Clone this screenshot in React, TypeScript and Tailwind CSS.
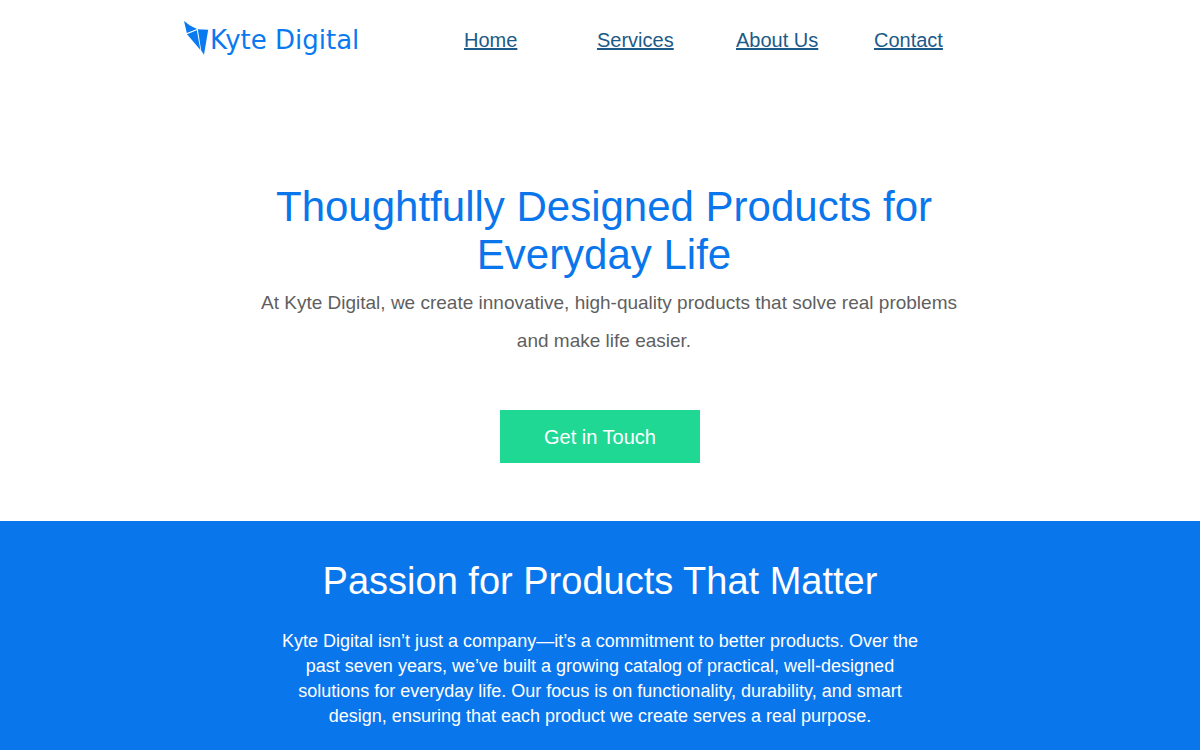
const links = [
  { label: "Home", href: "#home", cell: "w-[133px]" },
  { label: "Services", href: "#services", cell: "w-[139px]" },
  { label: "About Us", href: "#about", cell: "w-[138px]" },
  { label: "Contact", href: "#contact", cell: "" },
];

function Logo() {
  return (
    <a href="#home" className="flex w-[280px] items-center text-[#0a7af0]">
      <svg viewBox="0 0 26 40" className="h-10 w-[26px]" fill="currentColor" aria-hidden="true">
        <path d="M0 1 L6 5.6 L13 9 L2.8 13 Z" />
        <path d="M3 14.2 L12.8 10.2 L16.4 30 Z" />
        <path d="M13.8 9.3 L24.2 9.8 L20 34.8 L17.2 30.5 Z" />
      </svg>
      <span className="font-['DejaVu_Sans',sans-serif] text-[26px] leading-8">Kyte Digital</span>
    </a>
  );
}

export default function App() {
  return (
    <div className="min-h-screen bg-white font-['Liberation_Sans',Arial,sans-serif]">
      <header className="mx-auto flex max-w-[832px] items-center pt-5">
        <Logo />
        <nav className="flex text-xl leading-10 text-[#1d5a88]">
          {links.map((l) => (
            <div key={l.label} className={l.cell}>
              <a href={l.href} className="underline">{l.label}</a>
            </div>
          ))}
        </nav>
      </header>
      <main>
        <section className="flex flex-col items-center px-6 pt-[123px] pb-[58px] text-center">
          <h1 className="ml-2 max-w-[700px] text-[42px] leading-12 text-[#0a76ec]">
            Thoughtfully Designed Products for Everyday Life
          </h1>
          <p className="mt-[5px] ml-2 max-w-[720px] indent-[10px] text-[19px] leading-[38px] text-[#5f5f5f]">
            At Kyte Digital, we create innovative, high-quality products that solve real problems and make life easier.
          </p>
          <button type="button" className="mt-[50px] h-[53px] w-[200px] bg-[#1fd894] text-xl text-white">
            Get in Touch
          </button>
        </section>
        <section className="bg-[#0a76ec] px-6 pt-9 pb-10 text-center text-white">
          <h2 className="text-[38px] leading-12">Passion for Products That Matter</h2>
          <p className="mx-auto mt-6 max-w-[660px] text-lg leading-[25px]">
            Kyte Digital isn’t just a company—it’s a commitment to better products. Over the past seven years, we’ve built a growing catalog of practical, well-designed solutions for everyday life. Our focus is on functionality, durability, and smart design, ensuring that each product we create serves a real purpose.
          </p>
        </section>
      </main>
    </div>
  );
}
